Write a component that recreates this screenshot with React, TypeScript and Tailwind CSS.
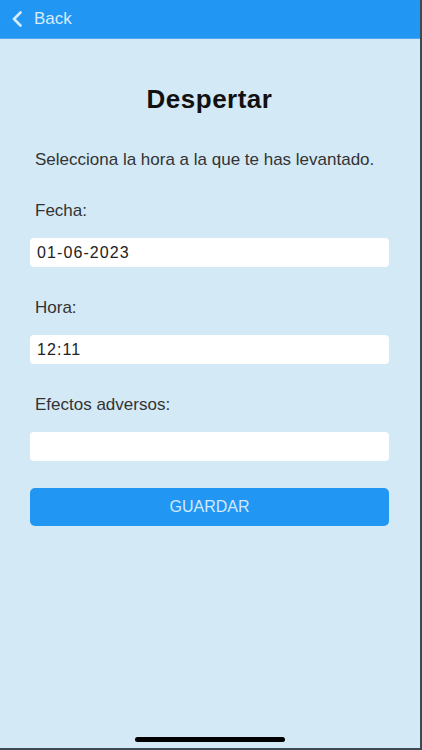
import React from 'react'

const font = { fontFamily: '"Liberation Sans", Arial, sans-serif' }

function Field({ label, value }: { label: string; value: string }) {
  return (
    <>
      <div className="mt-[31px] pl-[5px] text-[17px] leading-[20px] text-[#333333]">{label}</div>
      <div className="mt-[17px] flex h-[29px] items-center rounded-[4px] bg-white pl-[7px] text-[16px] tracking-[1.1px] text-[#222222]">
        {value}
      </div>
    </>
  )
}

export default function App() {
  return (
    <div className="h-[750px] w-[422px] bg-[#3c4a54]" style={font}>
      <div className="flex h-[748px] w-[420px] flex-col bg-[#d4e9f6]">
        <header className="flex h-[39px] shrink-0 items-center border-b border-[#4fa7f0] bg-[#2196f3] pl-[12px]">
          <svg width="10" height="16" viewBox="0 0 10 16" fill="none" className="mr-[12px]">
            <path d="M8.5 1.5 L2 8 L8.5 14.5" stroke="#d8ecfc" strokeWidth="2.6" strokeLinecap="round" strokeLinejoin="round" />
          </svg>
          <span className="text-[17px] leading-[20px] text-[#d8ecfc]">Back</span>
        </header>

        <main className="flex flex-1 flex-col px-[30px] pr-[31px]">
          <h1 className="mt-[45px] text-center text-[26px] font-bold leading-[30px] tracking-[0.5px] text-[#111111]">
            Despertar
          </h1>
          <p className="mt-[36px] pl-[5px] text-[17px] leading-[20px] text-[#333333]">
            Selecciona la hora a la que te has levantado.
          </p>

          <Field label="Fecha:" value="01-06-2023" />
          <Field label="Hora:" value="12:11" />
          <Field label="Efectos adversos:" value="" />

          <button className="mt-[27px] flex h-[38px] items-center justify-center rounded-[5px] bg-[#2196f3] text-[16px] text-[#d3e9fc]">
            GUARDAR
          </button>

          <div className="flex-1" />
          <div className="mx-auto mb-[6px] h-[5px] w-[150px] rounded-full bg-black" />
        </main>
      </div>
    </div>
  )
}
